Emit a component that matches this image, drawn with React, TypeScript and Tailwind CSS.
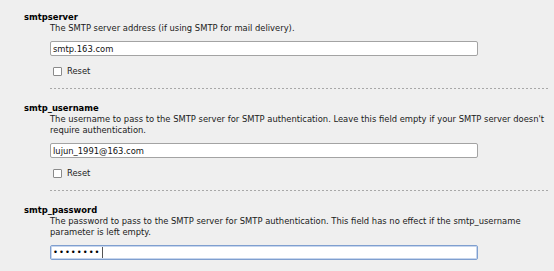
import React from "react"

type Setting = {
  name: string
  description: string
  value: string
  password?: boolean
}

const settings: Setting[] = [
  {
    name: "smtpserver",
    description: "The SMTP server address (if using SMTP for mail delivery).",
    value: "smtp.163.com",
  },
  {
    name: "smtp_username",
    description:
      "The username to pass to the SMTP server for SMTP authentication. Leave this field empty if your SMTP server doesn't require authentication.",
    value: "lujun_1991@163.com",
  },
  {
    name: "smtp_password",
    description:
      "The password to pass to the SMTP server for SMTP authentication. This field has no effect if the smtp_username parameter is left empty.",
    value: "12345678",
    password: true,
  },
]

function SettingRow({ setting, last }: { setting: Setting; last: boolean }) {
  return (
    <div className="flex flex-col">
      <div className="h-[11px] leading-[11px] font-bold text-black">{setting.name}</div>
      <div className="pl-[26px] pr-[6px]">
        <p className="leading-[11px] text-[#1a1a1a]">{setting.description}</p>
        {setting.password ? (
          <div className="mt-[7px] flex h-[15px] w-[428px] items-center rounded-[2px] border border-[#7f9fcf] bg-white pl-[2px] shadow-[inset_0_0_0_1px_#c7d6ee]">
            <span className="tracking-[1px] text-black">••••••••</span>
            <span className="ml-[1px] h-[11px] w-px bg-[#555]" />
          </div>
        ) : (
          <input
            readOnly
            value={setting.value}
            className="mt-[7px] block h-[15px] w-[428px] rounded-[2px] border border-[#a3a3a3] bg-white px-[2px] leading-[13px] text-[#111] outline-none"
          />
        )}
        <label className="mt-[9px] flex h-[12px] items-center gap-[5px] pl-[3px]">
          <span className="inline-block h-[9px] w-[9px] rounded-[1px] border border-[#8a8a8a] bg-white" />
          <span className="text-[#222]">Reset</span>
        </label>
        {!last && (
          <div className="mt-[11px] h-px w-[498px] bg-[repeating-linear-gradient(to_right,#a8a8a8_0_2px,transparent_2px_4px)]" />
        )}
      </div>
    </div>
  )
}

export default function App() {
  return (
    <div className="h-[271px] w-[554px] overflow-hidden bg-[#efefef] pl-[24px] pt-[12px] font-['DejaVu_Sans',sans-serif] text-[8.4px]">
      <div className="flex flex-col gap-[14px]">
        {settings.map((s, i) => (
          <SettingRow key={s.name} setting={s} last={i === settings.length - 1} />
        ))}
      </div>
    </div>
  )
}
